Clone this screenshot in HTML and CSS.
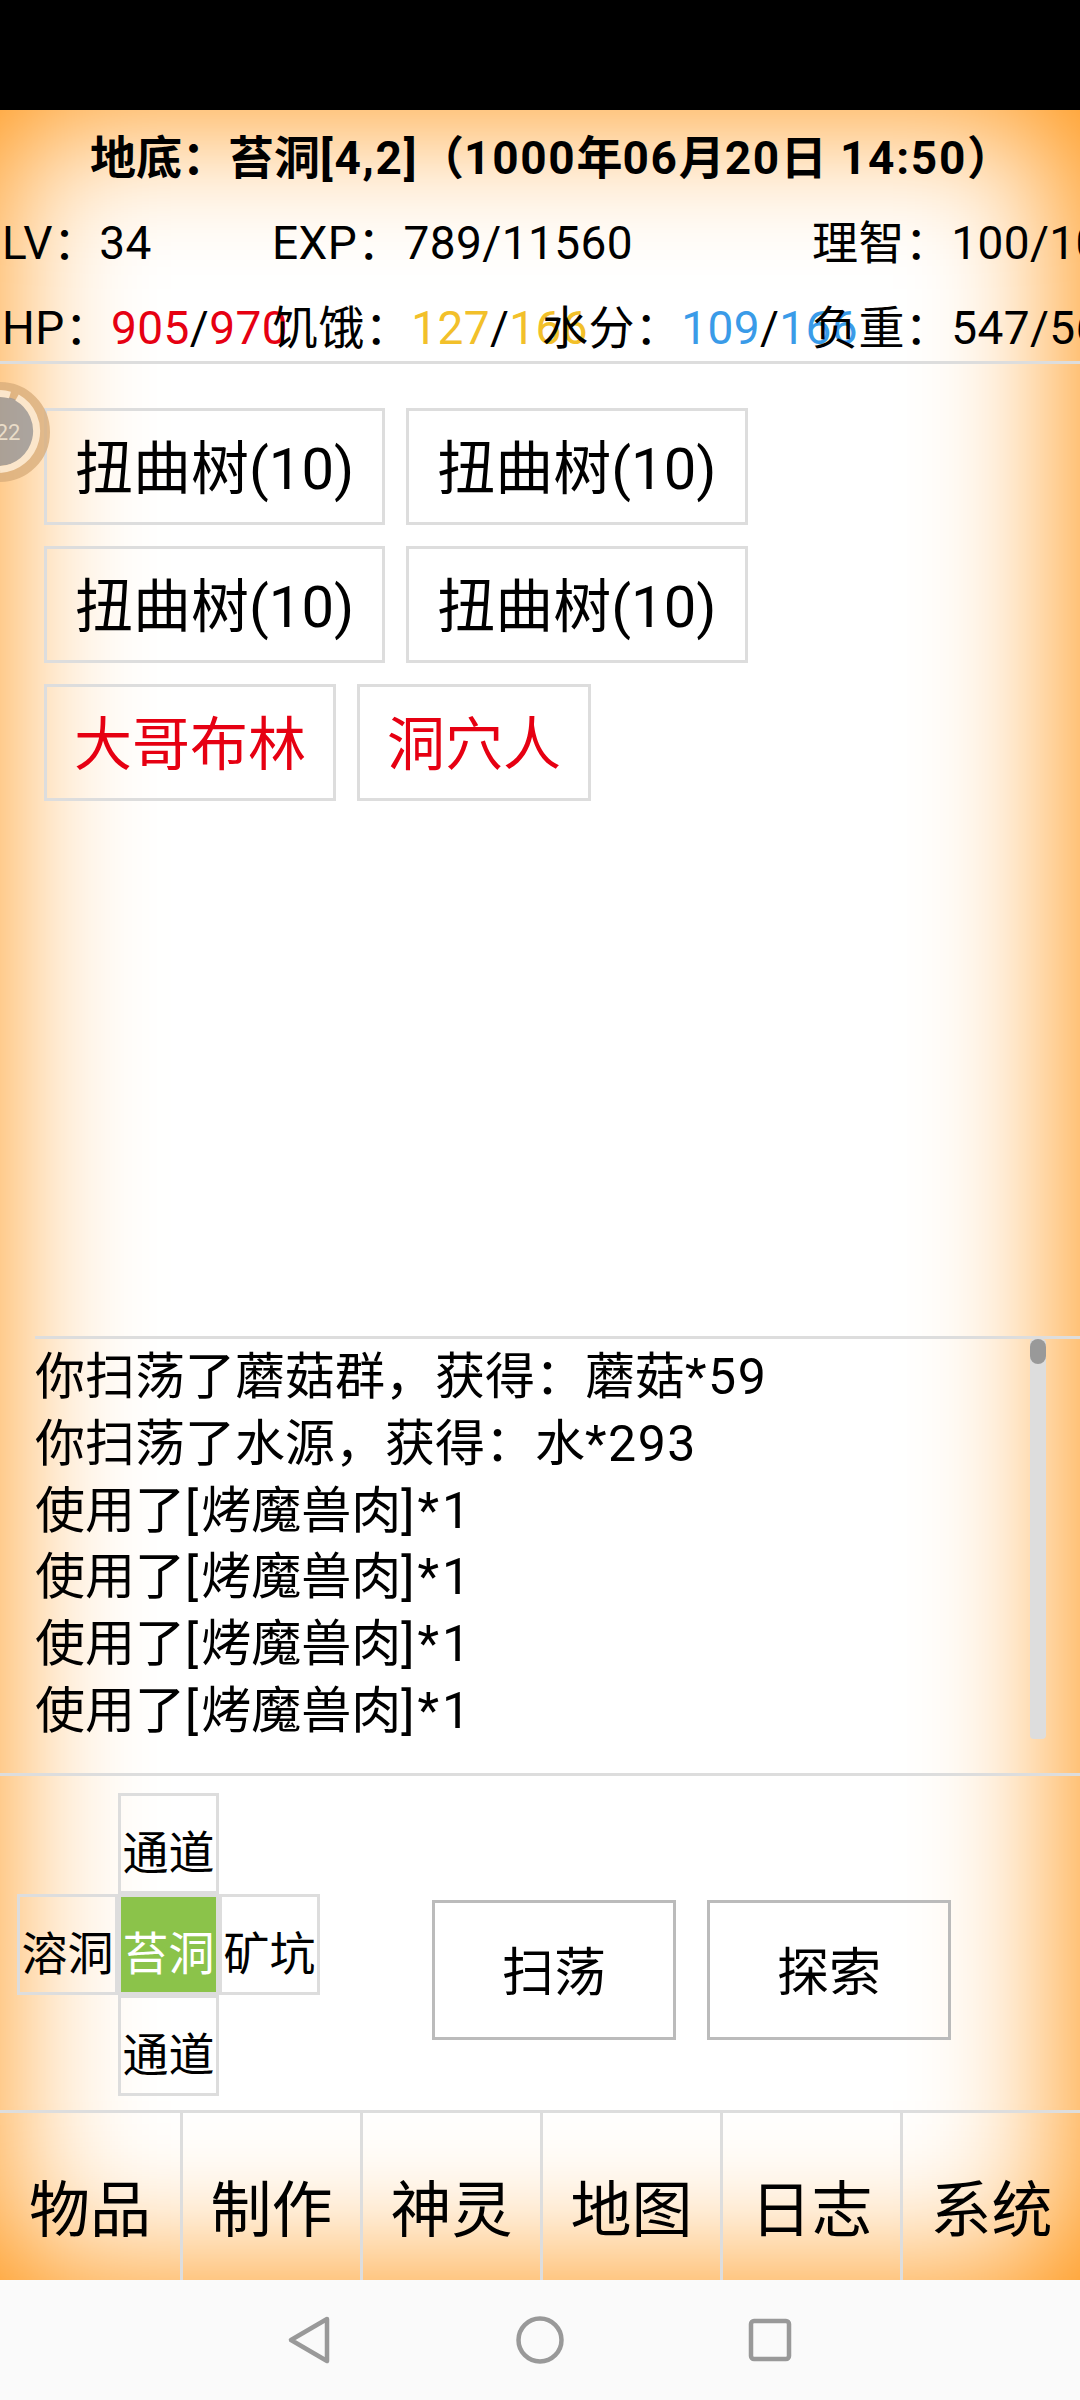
FILE: index.html
```html
<!DOCTYPE html>
<html lang="zh-CN">
<head>
<meta charset="utf-8">
<title>地底</title>
<link rel="stylesheet" href="styles.css">
</head>
<body>
<div class="status-bar"></div>
<div class="game">
  <header class="header">
    <h1 class="title">地底&#xFF1A;苔洞<span class="title-num">[4,2]</span>&#xFF08;<span class="title-num">1000</span>年<span class="title-num">06</span>月<span class="title-num">20</span>日<span class="title-num"> 14:50</span>&#xFF09;</h1>
    <div class="stats">
      <div class="stat">LV&#xFF1A;34</div>
      <div class="stat">EXP&#xFF1A;789/11560</div>
      <div class="stat"></div>
      <div class="stat">理智&#xFF1A;100/100</div>
      <div class="stat">HP&#xFF1A;<span class="red">905</span>/<span class="red">970</span></div>
      <div class="stat">饥饿&#xFF1A;<span class="yellow">127</span>/<span class="yellow">166</span></div>
      <div class="stat">水分&#xFF1A;<span class="blue">109</span>/<span class="blue">166</span></div>
      <div class="stat">负重&#xFF1A;547/566</div>
    </div>
  </header>
  <main class="main">
    <div class="targets">
      <div class="target-row"><div class="target">扭曲树(10)</div><div class="target">扭曲树(10)</div></div>
      <div class="target-row"><div class="target">扭曲树(10)</div><div class="target">扭曲树(10)</div></div>
      <div class="target-row"><div class="target foe red">大哥布林</div><div class="target foe red">洞穴人</div></div>
    </div>
    <svg class="float-ball" width="52" height="104" viewBox="0 0 52 104">
      <circle class="ball-ring" cx="0" cy="52" r="42.500"/>
      <circle class="ball-core" cx="0" cy="51" r="35"/>
      <path class="ball-arc" d="M17 17.500a38.500 38.500 0 0 1 -17 72"/>
      <path class="ball-arc" d="M0 13.500a38.500 38.500 0 0 1 10 1.500"/>
      <text class="ball-text" x="8" y="60">22</text>
    </svg>
  </main>
  <section class="log">
    <div class="log-lines">
      <p class="log-line">你扫荡了蘑菇群&#xFF0C;获得&#xFF1A;蘑菇<span class="log-num">*59</span></p>
      <p class="log-line">你扫荡了水源&#xFF0C;获得&#xFF1A;水<span class="log-num">*293</span></p>
      <p class="log-line">使用了<span class="log-wide">[</span>烤魔兽肉<span class="log-wide">]*1</span></p>
      <p class="log-line">使用了<span class="log-wide">[</span>烤魔兽肉<span class="log-wide">]*1</span></p>
      <p class="log-line">使用了<span class="log-wide">[</span>烤魔兽肉<span class="log-wide">]*1</span></p>
      <p class="log-line">使用了<span class="log-wide">[</span>烤魔兽肉<span class="log-wide">]*1</span></p>
    </div>
    <div class="scrollbar"><div class="thumb"></div></div>
  </section>
  <section class="controls">
    <div class="cross">
      <div class="cell north">通道</div>
      <div class="cell west">溶洞</div>
      <div class="cell center">苔洞</div>
      <div class="cell east">矿坑</div>
      <div class="cell south">通道</div>
    </div>
    <div class="actions">
      <div class="action">扫荡</div>
      <div class="action">探索</div>
    </div>
  </section>
  <nav class="tabs">
    <div class="tab">物品</div>
    <div class="tab">制作</div>
    <div class="tab">神灵</div>
    <div class="tab">地图</div>
    <div class="tab">日志</div>
    <div class="tab">系统</div>
  </nav>
</div>
<div class="nav-bar">
  <svg class="nav-icon" width="44" height="50" viewBox="0 0 44 50"><path class="nav-stroke" d="M40 4 L4 25 L40 46 Z"/></svg>
  <svg class="nav-icon" width="50" height="50" viewBox="0 0 50 50"><circle class="nav-stroke" cx="25" cy="25" r="21.500"/></svg>
  <svg class="nav-icon" width="44" height="44" viewBox="0 0 44 44"><rect class="nav-stroke" x="3" y="3" width="38" height="38" rx="3"/></svg>
</div>
</body>
</html>
```

FILE: styles.css
```css
* { box-sizing: border-box; }
html, body { margin: 0; padding: 0; }
body {
  width: 1080px;
  height: 2400px;
  overflow: hidden;
  background: #fafafa;
  color: #000;
  font-family: Roboto, "Noto Sans CJK SC", sans-serif;
}
.status-bar { height: 110px; background: #000; }
.game {
  height: 2170px;
  display: flex;
  flex-direction: column;
  background: #fff;
  box-shadow: inset -8px 0 150px #ff8c00;
}
.header { flex: none; height: 254px; border-bottom: 3px solid #ddd; }
.title {
  margin: 0;
  height: 90px;
  padding-left: 23px;
  font-size: 46px;
  font-weight: 700;
  line-height: 96px;
  text-align: center;
  white-space: nowrap;
}
.title-num { letter-spacing: 1.7px; }
.stats {
  display: grid;
  grid-template-columns: repeat(4, 270px);
  grid-auto-rows: 60px;
  row-gap: 25px;
  margin-top: 13px;
  padding-left: 2px;
}
.stat { font-size: 46px; letter-spacing: .4px; line-height: 60px; white-space: nowrap; }
.red { color: #e60012; }
.yellow { color: #f2c02a; }
.blue { color: #3a9be8; }
.main { position: relative; flex: 1; padding: 44px 44px 0; }
.targets { display: flex; flex-direction: column; gap: 21px; }
.target-row { display: flex; gap: 21px; }
.target {
  height: 117px;
  padding: 0 28px;
  border: 3px solid #ddd;
  font-size: 58px;
  line-height: 116px;
  white-space: nowrap;
}
.foe { padding: 0 27px; line-height: 117px; }
.float-ball { position: absolute; left: 0; top: 16px; }
.ball-ring { fill: none; stroke: #d9ae7c; stroke-opacity: .8; stroke-width: 15px; }
.ball-core { fill: #8f9298; fill-opacity: .75; }
.ball-arc { fill: none; stroke: #fbe6cb; stroke-width: 7px; }
.ball-text { font-size: 22px; fill: #e9dcc8; text-anchor: middle; }
.log {
  display: flex;
  flex: none;
  height: 437px;
  margin-left: 35px;
  border-top: 3px solid #ddd;
}
.log-lines { width: 995px; padding-top: 5px; }
.log-line { margin: 0; font-size: 50px; line-height: 66.8px; white-space: nowrap; }
.log-num { letter-spacing: 1.5px; }
.log-wide { letter-spacing: 3px; }
.scrollbar {
  width: 16px;
  height: 400px;
  background: #ddd;
  border-radius: 4px;
}
.thumb { height: 25px; background: #999; border-radius: 8px; }
.controls {
  display: flex;
  flex: none;
  height: 340px;
  padding: 17px 0 0 17px;
  border-top: 3px solid #ddd;
  border-bottom: 3px solid #ddd;
}
.cross {
  display: grid;
  grid-template-columns: repeat(3, 101px);
  grid-template-rows: repeat(3, 101px);
}
.cell {
  border: 3px solid #ddd;
  font-size: 46px;
  line-height: 97px;
  padding-top: 9px;
  text-align: center;
  white-space: nowrap;
}
.north { grid-column: 2; grid-row: 1; }
.west { grid-column: 1; grid-row: 2; }
.center { grid-column: 2; grid-row: 2; background: #8bc34a; color: #fff; }
.east { grid-column: 3; grid-row: 2; }
.south { grid-column: 2; grid-row: 3; }
.actions { display: flex; gap: 31px; margin: 107px 0 0 112px; }
.action {
  width: 244px;
  height: 140px;
  border: 3px solid #bbb;
  font-size: 52px;
  line-height: 142px;
  text-align: center;
}
.tabs { display: flex; flex: none; height: 167px; }
.tab {
  width: 180px;
  border-left: 3px solid #ddd;
  font-size: 61px;
  line-height: 155px;
  padding-top: 21px;
  text-align: center;
}
.tab:first-child { border-left: 0; }
.nav-bar {
  position: relative;
  height: 120px;
  background: #fafafa;
}
.nav-icon { position: absolute; top: 50%; transform: translateY(-50%); }
.nav-stroke { fill: none; stroke: #999; stroke-width: 4.5px; stroke-linejoin: round; }
.nav-icon:nth-child(1) { left: 287px; }
.nav-icon:nth-child(2) { left: 515px; }
.nav-icon:nth-child(3) { left: 748px; }
```
